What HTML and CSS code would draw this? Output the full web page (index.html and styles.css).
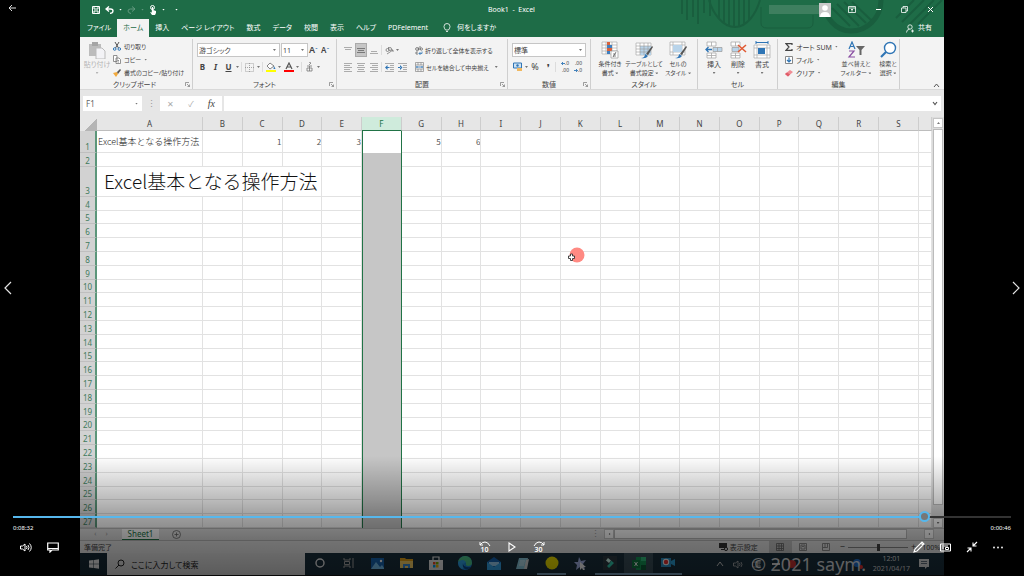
FILE: index.html
```html
<!DOCTYPE html>
<html lang="ja">
<head>
<meta charset="utf-8">
<title>Book1 - Excel</title>
<link rel="stylesheet" href="styles.css">
</head>
<body>
<div class="player">
  <aside class="side side-left">
    <button class="plain back" aria-label="戻る"><svg width="9" height="8" viewBox="0 0 9 8" fill="none" stroke="#ddd"><path d="M8 4H1M4 1L1 4l3 3"/></svg></button>
    <button class="plain nav" aria-label="前へ"><svg width="8" height="14" viewBox="0 0 8 14" fill="none" stroke="#e5e5e5" stroke-width="1.2"><path d="M7 1L1 7l6 6"/></svg></button>
  </aside>

  <main class="video">
    <header class="titlebar">
      <svg class="pattern" width="280" height="37" viewBox="0 0 280 37" fill="none" stroke="#195e3e" stroke-width="2"><path d="M18 0v14M23 0v20M29 0v17M34 0v24M40 0v13M46 0v16"/><path d="M45 0c4 14 14 27 26 27S92 14 96 0M55 0v19M60 0v23M65 0v26M70 0v27M75 0v26M80 0v24M85 0v20"/><path d="M97 7v16q0 5 6 5h40q6 0 6-5V15" stroke-width="1"/><path d="M160 0c0 18 12 31 27 31s30-12 30-31" stroke-width="5"/><path d="M168 8l18 18M173 4l22 22M180 2l22 21M188 2l19 18M232 18L250 0M238 22L260 0M246 24L270 0M254 24L278 0"/></svg>
      <div class="qat">
        <button class="plain" aria-label="保存"><svg width="8" height="8" viewBox="0 0 8 8" fill="none" stroke="#fff"><path d="M.5.5h7v7h-7zM2 .5V3h4V.5M2 7.500V5h4v2.500"/></svg></button>
        <button class="plain" aria-label="元に戻す"><svg width="9" height="8" viewBox="0 0 9 8" fill="none" stroke="#fff" stroke-width="1.400"><path d="M4 .5L1 3l3 2.500M1 3h4.500Q8 3 8 5T5 7.500"/></svg></button><i class="caret"></i>
        <button class="plain dim" aria-label="やり直し"><svg width="9" height="8" viewBox="0 0 9 8" fill="none" stroke="#fff"><path d="M5 .5L8 3 5 5.500M8 3H3.500Q1 3 1 5t3 2.500"/></svg></button><i class="caret dim"></i>
        <button class="plain" aria-label="タッチ"><svg width="8" height="10" viewBox="0 0 8 10"><circle cx="3.500" cy="2.500" r="2" fill="none" stroke="#fff"/><path d="M2.800 2h1.400v3L7 6v2L6 10H3L1 7l1.800.5z" fill="#fff"/></svg></button><i class="caret"></i>
        <i class="caret last"></i>
      </div>
      <div class="doc">Book1&nbsp; -&nbsp; Excel</div>
      <div class="account"><span class="name"></span><svg width="12" height="14" viewBox="0 0 12 14"><path fill="#c9c9c9" d="M0 0h12v14H0z"/><circle cx="6" cy="5" r="2.800" fill="#fff"/><path d="M1 14q0-5 5-5t5 5z" fill="#fff"/></svg></div>
      <div class="window-buttons">
        <button class="plain" aria-label="リボンの表示"><svg width="8" height="7" viewBox="0 0 8 7" fill="none" stroke="#fff" stroke-width=".8"><path d="M.5.5h7v6h-7zM.5 2h7M4 5.500V3M3 4l1-1 1 1"/></svg></button>
        <button class="plain" aria-label="最小化"><svg width="7" height="7" viewBox="0 0 7 7" stroke="#fff"><path d="M1 3.500h5"/></svg></button>
        <button class="plain" aria-label="元のサイズ"><svg width="7" height="7" viewBox="0 0 7 7" fill="none" stroke="#fff" stroke-width=".8"><path d="M.5 2h4.500v4.500H.5zM2 2V.5h4.500V5H5"/></svg></button>
        <button class="plain" aria-label="閉じる"><svg width="7" height="7" viewBox="0 0 7 7" stroke="#fff"><path d="M1 1l5 5M6 1L1 6"/></svg></button>
      </div>
    </header>
    <nav class="tabs">
      <button>ファイル</button><button class="active">ホーム</button><button>挿入</button><button>ページ レイアウト</button><button>数式</button><button>データ</button><button>校閲</button><button>表示</button><button>ヘルプ</button><button>PDFelement</button>
      <button class="tell"><svg width="8" height="10" viewBox="0 0 8 10" fill="none" stroke="#fff" stroke-width=".8"><path d="M2.500 7Q1 5 1 3.500a3 3 0 0 1 6 0Q7 5 5.500 7zM3 8.500h2"/></svg>何をしますか</button>
      <button class="share"><svg width="8" height="9" viewBox="0 0 8 9" fill="none" stroke="#fff" stroke-width=".8"><circle cx="4" cy="3" r="2.200"/><path d="M.5 8.500q0-3 3-3.300M5 7h3M6.500 5.500v3"/></svg>共有</button>
    </nav>

    <section class="ribbon">
      <div class="group g-clip">
        <div class="tools">
          <button class="big faded"><svg width="18" height="18" viewBox="0 0 18 18"><path d="M1 3h12v12H1z" fill="#bcbcbc"/><path d="M4 1h6v4H4z" fill="#a5a5a5"/><path d="M8 7h6l3 3v8H8z" fill="#f3f3f6" stroke="#bbb"/></svg><span>貼り付け</span><i class="caret"></i></button>
          <div class="stack">
            <button><svg width="8" height="9" viewBox="0 0 8 9" fill="none"><path d="M2 0l3.500 6M6 0L2.500 6" stroke="#555"/><circle cx="1.700" cy="7" r="1.300" stroke="#2f75b5"/><circle cx="6.300" cy="7" r="1.300" stroke="#2f75b5"/></svg>切り取り</button>
            <button><svg width="8" height="9" viewBox="0 0 8 9" fill="#fff" stroke="#777" stroke-width=".8"><path d="M.5.5H4v6H.5zM3 3h3l1.500 1.500v4H3zM4.500 5.500H6M4.500 7H6"/></svg>コピー <i class="caret"></i></button>
            <button><svg width="8" height="8" viewBox="0 0 8 8"><path d="M0 4l4-1 1 2-2 3z" fill="#f2a93b"/><path d="M4 3l3-3 1 1-3 4z" fill="#555"/></svg>書式のコピー/貼り付け</button>
          </div>
        </div>
        <div class="label">クリップボード</div><svg class="launch" width="5" height="5" viewBox="0 0 5 5"><path d="M.5 4V.5H4M2 2l2.500 2.500M4.500 2.500v2h-2" fill="none" stroke="#777" stroke-width=".7"/></svg>
      </div>

      <div class="group g-font">
        <div class="tools rows">
          <div class="row tight">
            <label class="pick wide"><select aria-label="フォント"><option>游ゴシック</option></select></label>
            <label class="pick"><select aria-label="サイズ"><option>11</option></select></label>
            <button class="sq letter">A<sup>ˆ</sup></button><button class="sq letter small">A<sup>ˇ</sup></button>
          </div>
          <div class="row">
            <button class="sq"><b>B</b></button><button class="sq"><b><em>I</em></b></button><button class="sq"><b><u>U</u></b></button><i class="caret"></i>
            <i class="bar"></i>
            <button class="sq" aria-label="罫線"><svg width="9" height="9" viewBox="0 0 9 9" fill="none" stroke="#888" stroke-width=".7" stroke-dasharray="1 1"><path d="M.5.5h8v8h-8zM4.500 0v9M0 4.500h9"/></svg></button><i class="caret"></i>
            <i class="bar"></i>
            <button class="sq" aria-label="塗りつぶし"><svg width="10" height="10" viewBox="0 0 10 10"><path d="M4 1l4 3-4 3-3-3z" fill="#fff" stroke="#666" stroke-width=".8"/><path d="M8 4l1.500 3H7.500z" fill="#2f75b5"/><path d="M0 8h10v2H0z" fill="#ff0"/></svg></button><i class="caret"></i>
            <button class="sq" aria-label="文字色"><svg width="10" height="10" viewBox="0 0 10 10"><path d="M2 7l3-6 3 6M3 5h4" fill="none" stroke="#555" stroke-width="1.200"/><path d="M0 8h10v2H0z" fill="#f00"/></svg></button><i class="caret"></i>
            <i class="bar"></i>
            <button class="sq" aria-label="ふりがな"><svg width="7" height="10" viewBox="0 0 7 10" fill="none" stroke="#777" stroke-width=".8"><path d="M3 0l2 1-2 2M1 4h5M1 6h5v3H1zM3.500 4v5"/></svg></button><i class="caret"></i>
          </div>
        </div>
        <div class="label">フォント</div><svg class="launch" width="5" height="5" viewBox="0 0 5 5"><path d="M.5 4V.5H4M2 2l2.500 2.500M4.500 2.500v2h-2" fill="none" stroke="#777" stroke-width=".7"/></svg>
      </div>

      <div class="group g-align">
        <div class="tools rows">
          <div class="row">
            <button class="sq" aria-label="上揃え"><svg width="8" height="9" viewBox="0 0 8 9" stroke="#999" stroke-width=".8"><path d="M0 1.500h8M1 3.500h6"/></svg></button>
            <button class="sq pressed" aria-label="上下中央揃え"><svg width="8" height="9" viewBox="0 0 8 9" stroke="#666" stroke-width=".8"><path d="M0 2.500h8M1 4.500h6M0 6.500h8"/></svg></button>
            <button class="sq" aria-label="下揃え"><svg width="8" height="9" viewBox="0 0 8 9" stroke="#999" stroke-width=".8"><path d="M1 5.500h6M0 7.500h8"/></svg></button>
            <i class="bar"></i>
            <button class="sq" aria-label="方向"><svg width="9" height="9" viewBox="0 0 9 9" fill="none" stroke="#777" stroke-width=".8"><circle cx="2.500" cy="4" r="1.500"/><circle cx="5" cy="3" r="1.500"/><path d="M2 8l6-4M6 4h2v2M3.500 1v2"/></svg></button><i class="caret"></i>
            <button class="text"><svg width="8" height="9" viewBox="0 0 8 9" fill="none" stroke="#666" stroke-width=".8"><circle cx="2" cy="3" r="1.400"/><path d="M3.500 1.500v3M5 0v4"/><circle cx="6.300" cy="3" r="1.200"/><path d="M3 6H1v2h2"/><path d="M7 5.500v2H4M5.500 6L4 7.500 5.500 9" stroke="#2f75b5"/></svg>折り返して全体を表示する</button>
          </div>
          <div class="row">
            <button class="sq" aria-label="左揃え"><svg width="8" height="9" viewBox="0 0 8 9" stroke="#999" stroke-width=".8"><path d="M0 .5h8M0 2.500h6M0 4.500h8M0 6.500h6M0 8.500h8"/></svg></button>
            <button class="sq" aria-label="中央揃え"><svg width="8" height="9" viewBox="0 0 8 9" stroke="#999" stroke-width=".8"><path d="M0 .5h8M1 2.500h6M0 4.500h8M1 6.500h6M0 8.500h8"/></svg></button>
            <button class="sq" aria-label="右揃え"><svg width="8" height="9" viewBox="0 0 8 9" stroke="#999" stroke-width=".8"><path d="M0 .5h8M2 2.500h6M0 4.500h8M2 6.500h6M0 8.500h8"/></svg></button>
            <i class="bar"></i>
            <button class="sq" aria-label="インデント減"><svg width="9" height="9" viewBox="0 0 9 9"><path d="M0 .5h9M5 2.500h4M5 4.500h4M5 6.500h4M0 8.500h9" stroke="#999" stroke-width=".8"/><path d="M0 4.500L2.500 2v5zM2 4h2.500v1H2z" fill="#2f75b5"/></svg></button>
            <button class="sq" aria-label="インデント増"><svg width="9" height="9" viewBox="0 0 9 9"><path d="M0 .5h9M5 2.500h4M5 4.500h4M5 6.500h4M0 8.500h9" stroke="#999" stroke-width=".8"/><path d="M4.500 4.500L2 2v5zM0 4h2.500v1H0z" fill="#2f75b5"/></svg></button>
            <button class="text"><svg width="9" height="10" viewBox="0 0 9 10" fill="none"><path d="M.5.5h8v9h-8zM.5 3h8M.5 7h8M3 .5V3M6 .5V3M3 7v2.500M6 7v2.500" stroke="#888" stroke-width=".7"/><path d="M1 5h7M2.500 4L1.500 5l1 1M6.500 4l1 1-1 1" stroke="#2f75b5" stroke-width=".8"/></svg>セルを結合して中央揃え <i class="caret"></i></button>
          </div>
        </div>
        <div class="label">配置</div><svg class="launch" width="5" height="5" viewBox="0 0 5 5"><path d="M.5 4V.5H4M2 2l2.500 2.500M4.500 2.500v2h-2" fill="none" stroke="#777" stroke-width=".7"/></svg>
      </div>

      <div class="group g-num">
        <div class="tools rows">
          <div class="row tight"><label class="pick full"><select aria-label="表示形式"><option>標準</option></select></label></div>
          <div class="row">
            <button class="sq" aria-label="通貨"><svg width="10" height="10" viewBox="0 0 10 10"><path d="M.5 1h8v5h-8z" fill="#cfe3f3" stroke="#2f75b5"/><circle cx="4.500" cy="3.500" r="1.200" fill="#2f75b5"/><path d="M4 6h5v3H4z" fill="#f0b860"/></svg></button><i class="caret"></i>
            <button class="sq pct">%</button><button class="sq"><b>❜</b></button>
            <i class="bar"></i>
            <button class="sq tiny" aria-label="小数点以下の桁を増やす"><span><svg width="4" height="5" viewBox="0 0 4 5" fill="none" stroke="#2f75b5" stroke-width=".9"><path d="M4 2.500H.5M2 1L.5 2.500 2 4"/></svg>.0</span><span>.00</span></button>
            <button class="sq tiny" aria-label="小数点以下の桁を減らす"><span>.00</span><span><svg width="4" height="5" viewBox="0 0 4 5" fill="none" stroke="#2f75b5" stroke-width=".9"><path d="M0 2.500h3.500M2 1l1.500 1.500L2 4"/></svg>.0</span></button>
          </div>
        </div>
        <div class="label">数値</div><svg class="launch" width="5" height="5" viewBox="0 0 5 5"><path d="M.5 4V.5H4M2 2l2.500 2.500M4.500 2.500v2h-2" fill="none" stroke="#777" stroke-width=".7"/></svg>
      </div>

      <div class="group g-style">
        <div class="tools">
          <button class="big"><svg width="18" height="18" viewBox="0 0 18 18"><path d="M1 1h15v12H1zM1 4h15M1 7h15M1 10h15M5 1v12M11 1v12" fill="#fff" stroke="#aaa" stroke-width=".7"/><path d="M6 1h3v3H6zM6 7h5v3H6z" fill="#d9623b"/><path d="M6 4h5v3H6zM6 10h3v3H6z" fill="#3f7fbf"/><path d="M10 10h7v7h-7z" fill="#fff" stroke="#999" stroke-width=".7"/><path d="M12 13h3M12 15h3M15 11l-3 5" stroke="#555" stroke-width=".7"/></svg><span>条件付き</span><span>書式 <i class="caret"></i></span></button>
          <button class="big"><svg width="18" height="18" viewBox="0 0 18 18"><path d="M1 2h15v12H1z" fill="#fff" stroke="#aaa" stroke-width=".7"/><path d="M5 5h11v9H5z" fill="#b9d4ea"/><path d="M1 5h15M1 8h15M1 11h15M5 2v12M9 2v12M13 2v12" stroke="#999" stroke-width=".6"/><path d="M17 5l-6 8 2 1 5-8z" fill="#555"/><path d="M6 17q4 0 4-4l3 2q-2 3-7 2z" fill="#2f75b5"/></svg><span>テーブルとして</span><span>書式設定 <i class="caret"></i></span></button>
          <button class="big"><svg width="18" height="18" viewBox="0 0 18 18"><path d="M1 1h15v13H1zM1 4h15M1 11h15M4 1v13M13 1v13" fill="#fff" stroke="#aaa" stroke-width=".7"/><path d="M4 4h9v7H4z" fill="#b9d4ea"/><path d="M17 5l-6 8 2 1 5-8z" fill="#555"/><path d="M6 17q4 0 4-4l3 2q-2 3-7 2z" fill="#2f75b5"/></svg><span>セルの</span><span>スタイル <i class="caret"></i></span></button>
        </div>
        <div class="label">スタイル</div>
      </div>

      <div class="group g-cells">
        <div class="tools">
          <button class="big"><svg width="18" height="18" viewBox="0 0 18 18"><path d="M2 1h9v4H2zM6.500 1v4M2 12h9v5H2zM6.500 12v5M2 14.500h9" fill="#fff" stroke="#aaa" stroke-width=".8"/><path d="M8 6.500h9v4H8zM12.500 6.500v4" fill="#b9d4ea" stroke="#999" stroke-width=".7"/><path d="M7 8.500H1M3.500 6L1 8.500 3.500 11" fill="none" stroke="#2f75b5" stroke-width="1.300"/></svg><span>挿入</span><i class="caret"></i></button>
          <button class="big"><svg width="18" height="18" viewBox="0 0 18 18"><path d="M2 1h9v4H2zM6.500 1v4M2 12h9v5H2zM6.500 12v5M2 14.500h9" fill="#fff" stroke="#aaa" stroke-width=".8"/><path d="M3 6.500h7v4H3z" fill="#b9d4ea" stroke="#999" stroke-width=".7"/><path d="M9 4l8 7M17 4l-8 7" stroke="#e05a33" stroke-width="1.600"/></svg><span>削除</span><i class="caret"></i></button>
          <button class="big"><svg width="18" height="18" viewBox="0 0 18 18"><path d="M3 1.500h12M3 0v3M15 0v3" stroke="#2f75b5"/><path d="M1 4h16v13H1zM1 7h16M1 14h16M4 4v13M14 4v13" fill="#fff" stroke="#aaa" stroke-width=".7"/><path d="M5 7h7v6H5z" fill="#2f75b5"/></svg><span>書式</span><i class="caret"></i></button>
        </div>
        <div class="label">セル</div>
      </div>

      <div class="group g-edit">
        <div class="tools">
          <div class="stack">
            <button><svg width="8" height="8" viewBox="0 0 8 8" fill="none" stroke="#444" stroke-width="1.200"><path d="M7 2V.7H1L4 4 1 7.300h6V6"/></svg>オート SUM <i class="caret"></i></button>
            <button><svg width="8" height="8" viewBox="0 0 8 8" fill="#fff"><path d="M.5.5h7v7h-7z" stroke="#888"/><path d="M4 1.500V6M2 4l2 2 2-2" fill="none" stroke="#2f75b5" stroke-width="1.200"/></svg>フィル <i class="caret"></i></button>
            <button><svg width="8" height="8" viewBox="0 0 8 8"><path d="M0 5l5-4 3 2-5 4.500z" fill="#ef8d95"/><path d="M0 5l2-1.500 3 2L3 7.500z" fill="#e05c69"/></svg>クリア <i class="caret"></i></button>
          </div>
          <button class="big"><svg width="18" height="18" viewBox="0 0 18 18" fill="none"><path d="M2 8l3-7 3 7M3 5.500h4" stroke="#2f75b5" stroke-width="1.200"/><path d="M2 10h5l-5 6h6" stroke="#8a4fa3" stroke-width="1.200"/><path d="M9 5h9l-3.500 4v5h-2V9z" fill="#666"/></svg><span>並べ替えと</span><span>フィルター <i class="caret"></i></span></button>
          <button class="big"><svg width="18" height="18" viewBox="0 0 18 18" fill="#fff" stroke="#2f75b5"><circle cx="11" cy="7" r="5.500" stroke-width="1.400"/><path d="M7 11l-5 5" stroke-width="2.200"/></svg><span>検索と</span><span>選択 <i class="caret"></i></span></button>
        </div>
        <div class="label">編集</div>
      </div>
      <button class="plain collapse" aria-label="リボンを折りたたむ"><svg width="7" height="5" viewBox="0 0 7 5" fill="none" stroke="#555"><path d="M1 4l2.500-3L6 4"/></svg></button>
    </section>

    <section class="formula">
      <div class="namebox"><input aria-label="名前ボックス" value="F1"><i class="caret"></i></div>
      <span class="dots">⋮</span>
      <div class="fx"><button>✕</button><button>✓</button><button class="f"><em>fx</em></button></div>
      <div class="entry"><input aria-label="数式バー"><svg width="6" height="5" viewBox="0 0 6 5" fill="none" stroke="#555" stroke-width="1.200"><path d="M1 1l2 2.500L5 1"/></svg></div>
    </section>

    <section class="sheet">
      <div class="grid-area"><table class="cells"><colgroup id="cols"></colgroup><thead id="head"></thead><tbody id="rows"></tbody></table></div>
      <div class="vscroll"><button aria-label="上へ"><i class="caret up"></i></button><span class="thumb"></span><button aria-label="下へ"><i class="caret"></i></button></div>
      <svg class="pointer" width="18" height="17" viewBox="0 0 18 17"><circle cx="10" cy="8" r="7.500" fill="#ff8a83"/><path d="M3.500 7h2v2h2v2.500h-2v2h-2v-2h-2V9h2z" fill="#fff" stroke="#333" stroke-width=".9"/></svg>
    </section>

    <div class="sheetbar">
      <span class="arrows"><i>‹</i><i>›</i></span><button class="sheet-tab">Sheet1</button>
      <button class="plain add" aria-label="新しいシート"><svg width="9" height="9" viewBox="0 0 9 9" fill="none" stroke="#666" stroke-width=".8"><circle cx="4.500" cy="4.500" r="4"/><path d="M4.500 2.500v4M2.500 4.500h4"/></svg></button>
      <span class="dots end">⋮</span>
      <div class="hscroll"><button aria-label="左へ"><i class="caret left"></i></button><span class="thumb"></span><button aria-label="右へ"><i class="caret right"></i></button></div>
    </div>
    <div class="status">
      <span>準備完了</span>
      <span class="display"><svg width="9" height="8" viewBox="0 0 9 8"><path d="M0 0h8v5H0zM2 6h3v1H2z" fill="#333"/><circle cx="7" cy="6" r="1.600" fill="#ddd" stroke="#333"/></svg>表示設定</span>
      <div class="views">
        <button class="on" aria-label="標準"><svg width="8" height="8" viewBox="0 0 8 8" fill="none" stroke="#666" stroke-width=".8"><path d="M.5.5h7v7h-7zM.5 3h7M.5 5.500h7M3 .5v7M5.500.5v7"/></svg></button>
        <button aria-label="ページレイアウト"><svg width="8" height="8" viewBox="0 0 8 8" fill="none" stroke="#777" stroke-width=".8"><path d="M.5.5h7v7h-7zM2 2h4v4H2zM3 3.500h2"/></svg></button>
        <button aria-label="改ページ"><svg width="8" height="8" viewBox="0 0 8 8" fill="none" stroke="#777" stroke-width=".8"><path d="M.5.5h7v7h-7zM3 .5v4h-2M5.500.5v4H3"/></svg></button>
      </div>
      <div class="zoom"><span>−</span><input type="range" aria-label="ズーム" value="50"><span>+</span></div><span class="pc">100%</span>
    </div>

    <footer class="taskbar">
      <button class="start" aria-label="スタート"><svg width="10" height="10" viewBox="0 0 10 10" fill="#eee"><path d="M0 1.500L4.500 1v3.700H0zM5 1l5-.8v4.500H5zM0 5.200h4.500V9L0 8.500zM5 5.200h5v4.600L5 9z"/></svg></button>
      <label class="search"><svg width="10" height="10" viewBox="0 0 10 10" fill="none" stroke="#222"><circle cx="6" cy="4" r="3"/><path d="M4 6L.5 9.500"/></svg><input placeholder="ここに入力して検索" aria-label="検索"></label>
      <div class="apps">
        <button aria-label="Cortana"><svg width="12" height="12" viewBox="0 0 12 12"><circle cx="6" cy="6" r="4" fill="none" stroke="#eee" stroke-width="1.400"/></svg></button>
        <button aria-label="タスク ビュー"><svg width="12" height="12" viewBox="0 0 12 12" fill="none" stroke="#aaa"><path d="M1 1v2h6V1M1 11V9h6v2M1.500 4.500h5v3h-5zM10 1v3M10 6v5M9 5h2"/></svg></button>
        <button aria-label="フォト"><svg width="13" height="13" viewBox="0 0 13 13"><path d="M0 1h13v11H0z" fill="#1767b5"/><path d="M0 12l5-7 4 5 2-2 2 3v1z" fill="#77c4f5"/><circle cx="10" cy="4" r="1.200" fill="#fff"/></svg></button>
        <button aria-label="エクスプローラー"><svg width="13" height="12" viewBox="0 0 13 12"><path d="M0 1h5l1 1h7v9H0z" fill="#e8a317"/><path d="M0 4h13v7H0z" fill="#ffd76a"/><path d="M3 11V7h7v4H8V9H5v2z" fill="#3b8ddb"/></svg></button>
        <button aria-label="Store"><svg width="14" height="14" viewBox="0 0 14 14"><path d="M4 5V1h6v4" fill="none" stroke="#eee" stroke-width="1.200"/><path d="M0 4h14v10H0z" fill="#eee"/><path d="M4 6h2.500v2.500H4z" fill="#f04e23"/><path d="M7 6h2.500v2.500H7z" fill="#7fb900"/><path d="M4 9h2.500v2.500H4z" fill="#00a3ee"/><path d="M7 9h2.500v2.500H7z" fill="#feb800"/></svg></button>
        <button aria-label="Edge"><svg width="14" height="14" viewBox="0 0 14 14"><circle cx="7" cy="7" r="7" fill="#1a83dc"/><path d="M0 6C1 1 5 0 8 0q6 1 6 7 0 3-4 3-3 0-2-3Q6 3 0 6z" fill="#4ecb8d"/><path d="M0 6Q5 2 8 6q-3 1-1 5l-3 2Q0 11 0 6z" fill="#2fa6ea"/><path d="M5 7q0 5 8 4-3 3-6 2-3-2-2-6z" fill="#0a4a8c"/></svg></button>
        <button aria-label="メール"><svg width="14" height="13" viewBox="0 0 14 13"><path d="M0 5l7-5 7 5v8H0z" fill="#1466b8"/><path d="M2 5h10v4H2z" fill="#9fd6fa"/><path d="M0 5l7 5 7-5v8H0z" fill="#35a8ee"/></svg></button>
        <button aria-label="メモ帳"><svg width="13" height="13" viewBox="0 0 13 13"><path d="M3 1h9l-2 11H0z" fill="#8fd0e5"/><path d="M10 3l3-1-2 10H8z" fill="#ddd"/><path d="M4 4h5M3.500 6h5M3 8h5" stroke="#fff" stroke-width=".7"/></svg></button>
        <button class="run" aria-label="録画"><svg width="14" height="14" viewBox="0 0 14 14"><circle cx="7" cy="7" r="6.500" fill="#f4e600"/></svg></button>
        <button aria-label="スター"><svg width="13" height="13" viewBox="0 0 13 13"><path d="M5 0l2 4 5-1-3 4 2 5-5-2-4 3 1-5-3-3h4z" fill="#a9b9ee"/><path d="M6 5l6 5-3 .3 2 2.700h-2L8 11l-2 2z" fill="#fff"/></svg></button>
        <button class="run" aria-label="Filmora"><svg width="14" height="14" viewBox="0 0 14 14"><path d="M0 0h14v14H0z" fill="#2c3a42"/><path d="M5 2l3 2.500L6 7 3 4.500z" fill="#d7fff5"/><path d="M8 4.500L11 7l-5 5-2-2 3-3z" fill="#32d0b3"/></svg></button>
        <button class="run current" aria-label="Excel"><svg width="14" height="13" viewBox="0 0 14 13"><path d="M4 0h10v13H4z" fill="#159a58"/><path d="M9 0h5v4H9z" fill="#31c481"/><path d="M9 8h5v5H9z" fill="#0b5e38"/><path d="M0 3h8v8H0z" fill="#107c41"/><path d="M2.500 5l3 4M5.500 5l-3 4" stroke="#fff"/></svg></button>
        <button class="run" aria-label="カメラ"><svg width="14" height="12" viewBox="0 0 14 12"><path d="M0 1h10v9H0z" fill="#2b93c9"/><path d="M10 4l4-2v7l-4-2z" fill="#2ba2d9"/><circle cx="5" cy="5" r="3.200" fill="#fff"/><circle cx="5" cy="5" r="2.200" fill="#e33"/></svg></button>
      </div>
      <div class="tray">
        <svg width="8" height="6" viewBox="0 0 8 6" fill="none" stroke="#ccc"><path d="M1 5l3-4 3 4"/></svg>
        <svg width="10" height="9" viewBox="0 0 10 9" fill="none" stroke="#bbb" stroke-width=".8"><path d="M.5 3h2L5 1v7L2.500 6h-2zM6.500 3q1 1.500 0 3M8 2q2 2.500 0 5"/></svg>
        <svg width="9" height="9" viewBox="0 0 9 9" fill="none" stroke="#bbb" stroke-width=".8"><path d="M.5 2h5v5h-5zM7 1v7M5.500 3H9M5.500 6H9"/></svg>
        <svg class="alerts" width="94" height="10" viewBox="0 0 94 10"><circle cx="22" cy="5" r="4" fill="#c33"/><path d="M2 5h8" stroke="#ddd" stroke-width="2"/><circle cx="92" cy="4" r="0" fill="#1f6fd0"/><circle cx="87" cy="4" r="4" fill="#1f6fd0"/><circle cx="91" cy="8" r="2" fill="#e33"/></svg>
        <div class="clock"><span>12:01</span><span>2021/04/17</span></div>
        <svg width="11" height="10" viewBox="0 0 11 10"><path d="M0 0h10v8H8L6 10V8H0z" fill="#ddd"/><path d="M2 2.500h6M2 4.500h6" stroke="#456" stroke-width=".8"/></svg>
      </div>
      <div class="watermark">© 2021 saym.</div>
    </footer>
  </main>

  <aside class="side side-right"><button class="plain nav" aria-label="次へ"><svg width="8" height="14" viewBox="0 0 8 14" fill="none" stroke="#e5e5e5" stroke-width="1.200"><path d="M1 1l6 6-6 6"/></svg></button></aside>

  <section class="controls">
    <input class="seek" type="range" aria-label="再生位置" min="0" max="1000" value="918">
    <div class="times"><span>0:08:32</span><span>0:00:46</span></div>
    <div class="buttons">
      <div class="set">
        <button class="plain" aria-label="音量"><svg width="12" height="11" viewBox="0 0 12 11" fill="none" stroke="#fff"><path d="M.5 4h2L5 2v7L2.500 7h-2zM6.500 4q1 1.500 0 3M8 3q2 2.500 0 5M9.500 1.500q3.500 4 0 8"/></svg></button>
        <button class="plain" aria-label="字幕"><svg width="12" height="11" viewBox="0 0 12 11" fill="none" stroke="#fff" stroke-width="1.200"><path d="M.7 1h10.600v7H5L3 10V8H.7zM1 6.500h10"/></svg></button>
      </div>
      <div class="set mid">
        <button class="plain skip" aria-label="10秒戻る"><svg width="12" height="6" viewBox="0 0 12 6" fill="none" stroke="#fff"><path d="M1 1v3h3M1 4q2-3 5-3t5 4"/></svg><span>10</span></button>
        <button class="plain" aria-label="再生"><svg width="8" height="10" viewBox="0 0 8 10" fill="none" stroke="#fff" stroke-width="1.100"><path d="M1 1l6 4-6 4z"/></svg></button>
        <button class="plain skip" aria-label="30秒進む"><svg width="12" height="6" viewBox="0 0 12 6" fill="none" stroke="#fff"><path d="M11 1v3H8M11 4Q9 1 6 1T1 5"/></svg><span>30</span></button>
      </div>
      <div class="set right">
        <button class="plain" aria-label="編集"><svg width="12" height="12" viewBox="0 0 12 12" fill="none" stroke="#fff" stroke-width="1.100"><path d="M1 11l1-3 7-7 2 2-7 7zM8 2l2 2"/></svg></button>
        <button class="plain" aria-label="ミニ ビュー"><svg width="11" height="9" viewBox="0 0 11 9" fill="none" stroke="#fff"><path d="M.5 1h10v7H.5zM2 3h6M2 5h2M5.500 4.500h3v2h-3z"/></svg></button>
        <button class="plain" aria-label="全画面を解除"><svg width="12" height="12" viewBox="0 0 12 12" fill="none" stroke="#fff" stroke-width="1.100"><path d="M11 1L7 5M7 1.500V5h3.500M1 11l4-4M1.500 7H5v3.500"/></svg></button>
        <button class="plain" aria-label="その他"><svg width="10" height="3" viewBox="0 0 10 3" fill="#fff"><circle cx="1" cy="1.500" r=".9"/><circle cx="5" cy="1.500" r=".9"/><circle cx="9" cy="1.500" r=".9"/></svg></button>
      </div>
    </div>
  </section>
</div>
<script src="sheet.js"></script>
</body>
</html>
```

FILE: styles.css
```css
* { box-sizing: border-box; }
body { margin: 0; background: #000; font-family: "Noto Sans", "Noto Sans CJK JP", sans-serif; font-size: 7px; color: #444; font-feature-settings: "palt"; }
button, input, select { font: inherit; font-feature-settings: inherit; color: inherit; border: 0; padding: 0; margin: 0; background: none; border-radius: 0; min-width: 0; }
svg { display: block; flex: none; }
i { font-style: normal; }
.plain { display: grid; place-items: center; }
.caret { width: 3px; height: 2px; flex: none; display: inline-block; background: #777; clip-path: polygon(0 0, 100% 0, 50% 100%); }
.caret.up { transform: rotate(180deg); }
.caret.left { transform: rotate(90deg); }
.caret.right { transform: rotate(270deg); }
.dim { opacity: .3; }

.player { position: relative; min-height: 100vh; display: grid; grid-template-columns: 80px 1fr 80px; background: #000; }
.side { display: flex; flex-direction: column; padding: 4px; }
.side .nav { margin: auto 0; }
.side-left { align-items: flex-start; position: relative; }
.back { position: absolute; left: 8px; top: 4px; }
.side-right { align-items: flex-end; }
.video { position: relative; display: flex; flex-direction: column; height: 100vh; min-width: 0; background: #e6e6e6; }

.titlebar { position: relative; height: 37px; flex: none; display: flex; align-items: flex-start; background: #1e6c47; color: #fff; padding: 2px 10px 0 0; }
.titlebar > div { height: 15px; }
.pattern { position: absolute; right: 0; top: 0; }
.qat { display: flex; align-items: center; gap: 5px; padding-left: 12px; width: 240px; }
.qat .caret { background: #fff; }
.qat .last { margin-left: 5px; }
.doc { flex: 1; margin-right: 66px; text-align: center; line-height: 15px; position: relative; }
.account, .window-buttons { display: flex; align-items: center; position: relative; }
.account .name { width: 50px; height: 9px; background: #3e7f5f; }
.window-buttons { gap: 19px; padding-left: 17px; }

.tabs { display: flex; flex: none; height: 18px; margin-top: -18px; padding-left: 1px; color: #fff; position: relative; }
.tabs button { padding: 0 6px; white-space: nowrap; line-height: 18px; }
.tabs .active { background: #f3f3f3; color: #1e6c47; }
.tabs .tell, .tabs .share { display: flex; align-items: center; gap: 6px; }
.tabs .tell { margin-left: 3px; }
.tabs .share { margin-left: auto; gap: 4px; padding-right: 12px; }

.ribbon { display: flex; height: 53px; flex: none; background: #f3f3f3; border-bottom: 1px solid #d8d8d8; }
.group { position: relative; display: flex; flex-direction: column; flex: none; margin-top: 2px; border-right: 1px solid #cfcfcf; padding: 0 4px; }
.g-clip { width: 113px; padding-left: 1px; }
.g-font { width: 144px; }
.g-align { width: 171px; }
.g-num { width: 83px; }
.g-style { width: 107px; }
.g-cells { width: 80px; }
.g-edit { width: 122px; }
.tools { display: flex; flex: 1; min-height: 0; }
.label { text-align: center; line-height: 9px; height: 9px; }
.launch { position: absolute; right: 2px; bottom: 2px; }
.big { flex: 1 1 0; display: flex; flex-direction: column; align-items: center; padding-top: 2px; line-height: 9px; white-space: nowrap; }
.big svg { margin-bottom: 1px; }
.big > .caret { margin-top: 3px; }
.big .caret { vertical-align: middle; }
.g-style .big, .g-edit .big, .g-clip .stack, .text { font-size: 6px; }
.faded { color: #b5b5b5; flex: 0 0 32px; }
.faded .caret { background: #b5b5b5; }
.stack { display: flex; flex-direction: column; padding-top: 1px; width: 76px; }
.stack button { display: flex; align-items: center; gap: 3px; height: 13px; white-space: nowrap; }
.g-edit .stack { width: 58px; padding-left: 3px; flex: none; }
.g-edit .big { flex: none; width: 32px; }
.g-style .big:nth-child(2) { flex: 0 0 38px; }
.g-cells .big { flex: 0 0 24px; }
.rows { flex-direction: column; padding-top: 4px; gap: 3px; }
.row { display: flex; align-items: center; height: 14px; gap: 1px; }
.sq { width: 12px; height: 14px; display: grid; place-items: center; flex: none; font-size: 8px; line-height: 12px; }
.g-font .sq { width: 11px; }
.g-font .row { gap: 2px; }
.g-font .row.tight { gap: 1px; }
.letter { display: flex; align-items: center; font-size: 9px; font-weight: 600; }
.letter.small { font-size: 8px; }
.letter sup { font-size: 6px; color: #2f75b5; line-height: 8px; }
.pressed { background: #c6c6c6; border: 1px solid #aaa; }
.bar { width: 1px; height: 10px; background: #dcdcdc; flex: none; }
.pick { position: relative; width: 28px; height: 14px; background: #fff; border: 1px solid #c6c6c6; display: block; }
.pick.wide { width: 86px; }
.pick.full { width: 75px; }
.pick select { appearance: none; width: 100%; height: 12px; padding-left: 1px; display: block; }
.pick::after { content: ""; position: absolute; right: 3px; top: 5px; width: 3px; height: 2px; background: #777; clip-path: polygon(0 0, 100% 0, 50% 100%); }
.g-align .tools { padding-left: 1px; }
.text { display: flex; align-items: center; gap: 2px; margin-left: auto; width: 88px; white-space: nowrap; }
.text .caret { margin-left: 4px; }
.pct { font-size: 9px; }
.tiny { display: flex; flex-direction: column; justify-content: center; align-items: flex-end; font-size: 5px; line-height: 7px; }
.tiny span { display: flex; align-items: center; height: 7px; }
.collapse { margin: auto 4px 1px auto; }

.formula { display: flex; align-items: center; height: 27px; flex: none; padding: 0 3px; }
.namebox, .fx, .entry { height: 15px; background: #fff; display: flex; align-items: center; }
.namebox { width: 59px; padding: 0 4px 0 3px; }
.namebox input { flex: 1; font-size: 8px; color: #666; }
.dots { width: 18px; text-align: center; color: #999; font-size: 9px; }
.fx { width: 62px; margin-right: 2px; justify-content: space-around; color: #aaa; font-size: 8px; }
.fx .f { color: #444; font-family: "Liberation Serif", serif; font-size: 10px; }
.entry { flex: 1; padding-right: 3px; }
.entry input { flex: 1; }

.sheet { position: relative; display: flex; flex: 1; min-height: 0; }
.grid-area { flex: 1; min-width: 0; display: grid; }
.cells { width: 100%; height: 100%; border-collapse: separate; border-spacing: 0; table-layout: fixed; background: #fff; }
.cells th, .cells td { padding: 0; line-height: 10px; overflow: hidden; white-space: nowrap; font-weight: 400; font-size: 8px; }
.cells thead th { height: 14px; background: #e6e6e6; border-right: 1px solid #cdcdcd; border-bottom: 1px solid #bdbdbd; }
.cells thead th.picked { background: #cfebdc; color: #217346; border-bottom-color: #217346; }
.cells thead .corner { background: linear-gradient(135deg, #e6e6e6 60%, #b5b5b5 60%); border: 0; }
.cells tbody th { background: #d2d2d2; color: #3f7a5c; border-right: 2px solid #5c967a; border-bottom: 1px solid #bfbfbf; vertical-align: bottom; }
.cells td { border-right: 1px solid #e2e2e2; border-bottom: 1px solid #e2e2e2; text-align: right; font-family: "Noto Sans CJK JP", sans-serif; font-feature-settings: normal; color: #555; }
.cells td.words { text-align: left; padding-left: 1px; font-size: 9px; font-weight: 300; color: #222; }
.cells td.heading { text-align: left; padding-left: 7px; font-size: 19px; line-height: 26px; font-weight: 300; color: #111; }
.cells td.picked { background: #c6c6c6; border-left: 1px solid #217346; border-right: 1px solid #217346; border-bottom: 0; }
.cells td.cursor { background: #fff; }
.tall { height: 22px; }
.taller { height: 30px; }
.col-head { width: 17px; }
.col-first { width: 106px; }
.col-last { width: 13px; }
.vscroll { width: 12px; display: flex; flex-direction: column; padding: 1px 1px 0; gap: 1px; background: #dcdcdc; }
.vscroll button, .hscroll button { width: 10px; height: 10px; background: #fff; border: 1px solid #c6c6c6; display: grid; place-items: center; flex: none; }
.thumb { background: #fff; border: 1px solid #bbb; }
.vscroll .thumb { height: 376px; }
.vscroll button:last-child { margin-top: auto; }
.pointer { position: absolute; left: 56.4%; top: 130px; pointer-events: none; }

.sheetbar { display: flex; height: 12px; flex: none; background: #e0e0e0; border-top: 1px solid #bbb; padding-right: 10px; }
.arrows { width: 42px; display: flex; justify-content: center; gap: 9px; line-height: 10px; color: #999; }
.sheet-tab { width: 37px; background: #fff; color: #217346; font-size: 8px; line-height: 10px; border-bottom: 1px solid #217346; }
.add { margin-left: 13px; }
.dots.end { margin-left: auto; line-height: 10px; }
.hscroll { width: 330px; display: flex; }
.hscroll .thumb { flex: 1; height: 10px; }
.hscroll button:last-child { margin-left: 17px; }
.status { display: flex; align-items: center; height: 13px; flex: none; padding: 0 4px; border-top: 1px solid #bbb; background: #e6e6e6; }
.display { margin-left: auto; display: flex; align-items: center; gap: 2px; }
.views { display: flex; margin-left: 11px; }
.views button { width: 23px; height: 12px; display: grid; place-items: center; }
.views .on { background: #c4c4c4; }
.zoom { display: flex; align-items: center; gap: 3px; margin-left: 2px; font-size: 9px; line-height: 10px; }
.zoom input { appearance: none; width: 60px; height: 8px; background: linear-gradient(#888, #888) center / 100% 1px no-repeat; }
.zoom input::-webkit-slider-thumb { appearance: none; width: 3px; height: 7px; background: #444; }
.pc { margin-left: 6px; }

.taskbar { position: relative; display: flex; height: 23px; flex: none; background: #1a303d; border-bottom: 1px solid #111; color: #ddd; }
.start { width: 27px; display: grid; place-items: center; background: #162a36; }
.search { width: 198px; display: flex; align-items: center; gap: 6px; padding-left: 8px; background: #e3e3e3; }
.search input { flex: 1; font-size: 8px; }
.search input::placeholder { color: #222; opacity: 1; }
.apps { display: flex; }
.apps button { width: 29px; display: grid; place-items: center; border-bottom: 2px solid transparent; }
.apps .run { border-color: #7fa6c4; }
.apps .current { background: #3a4f5a; }
.tray { display: flex; flex: 1; align-items: center; justify-content: flex-end; gap: 9px; padding-right: 14px; }
.clock { display: flex; flex-direction: column; align-items: center; line-height: 10px; }
.watermark { position: absolute; right: 78px; bottom: 0; font-size: 18px; line-height: 22px; color: rgba(255, 255, 255, .85); }

.controls { position: absolute; inset: auto 0 0; height: 120px; padding: 55px 13px 0; color: #fff; background: linear-gradient(rgba(0, 0, 0, 0), rgba(0, 0, 0, .27) 37%, rgba(0, 0, 0, .4) 53%, rgba(0, 0, 0, .5) 70%, rgba(0, 0, 0, .6)); }
.seek { appearance: none; display: block; width: 100%; height: 11px; background: linear-gradient(to right, #56b7ec 91%, #333 91%) center / 100% 2px no-repeat; }
.seek::-webkit-slider-thumb { appearance: none; width: 11px; height: 11px; border: 2px solid #56b7ec; border-radius: 50%; background: #777; }
.times { display: flex; justify-content: space-between; line-height: 12px; font-size: 6px; }
.buttons { display: grid; grid-template-columns: 1fr auto 1fr; align-items: center; height: 26px; padding: 0 8px 0 7px; }
.set { display: flex; align-items: center; gap: 15px; }
.mid { gap: 17px; }
.right { justify-content: flex-end; }
.skip span { font-size: 7px; line-height: 6px; font-weight: 600; }
```

FILE: sheet.js
```js
const letters = "ABCDEFGHIJKLMNOPQRS".split("");
const firstRow = { A: "Excel基本となる操作方法", C: 1, D: 2, E: 3, G: 5, H: 6 };
const heading = "Excel基本となる操作方法";

document.getElementById("cols").innerHTML =
  '<col class="col-head"><col class="col-first">' + "<col>".repeat(18) + '<col class="col-last">';

document.getElementById("head").innerHTML =
  '<tr><th class="corner"></th>' +
  letters.map(l => `<th${l === "F" ? ' class="picked"' : ""}>${l}</th>`).join("") +
  "<th></th></tr>";

let html = "";
for (let n = 1; n <= 27; n++) {
  const size = n === 1 ? "tall" : n === 3 ? "taller" : "";
  html += `<tr class="${size}"><th>${n}</th>`;
  for (const l of letters.concat("T")) {
    if (n === 3 && l === "A") { html += `<td class="heading" colspan="4">${heading}</td>`; continue; }
    if (n === 3 && "BCD".includes(l)) continue;
    const kind = l === "F" ? (n === 1 ? "picked cursor" : "picked") : l === "A" ? "words" : "";
    html += `<td class="${kind}">${n === 1 && firstRow[l] ? firstRow[l] : ""}</td>`;
  }
  html += "</tr>";
}
document.getElementById("rows").innerHTML = html;
```
